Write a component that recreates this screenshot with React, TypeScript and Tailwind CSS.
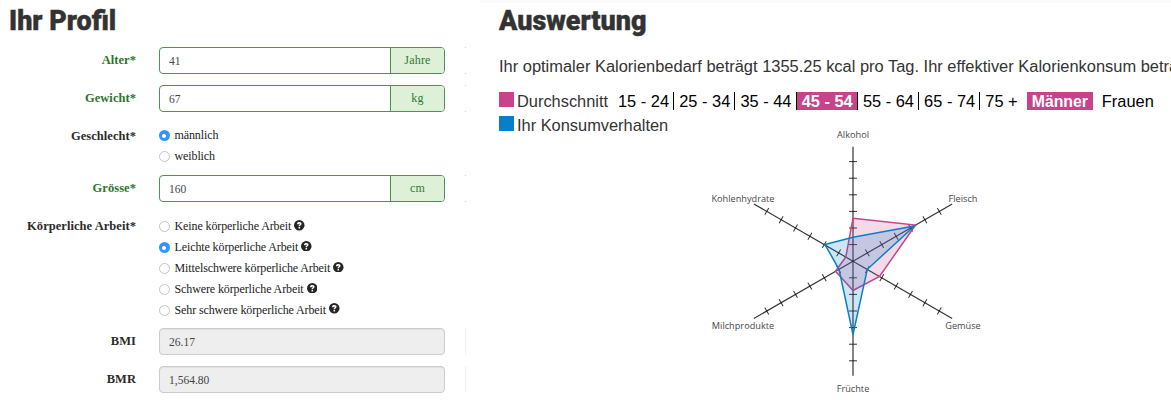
import type { ReactNode } from 'react';

function Heading({ children, className }: { children: ReactNode; className: string }) {
  return (
    <h2 className={`origin-left whitespace-nowrap font-[Roboto,sans-serif] text-[28.5px] font-black leading-[41px] text-[#333] [-webkit-text-stroke:0.4px_#333] ${className}`}>
      {children}
    </h2>
  );
}

function Label({ children, valid, className = '' }: { children: ReactNode; valid?: boolean; className?: string }) {
  return (
    <div className={`w-[136px] shrink-0 whitespace-nowrap text-right text-[12.5px] font-bold leading-[26px] tracking-[0.05px] ${valid ? 'text-[#2b752d]' : 'text-[#2b2b2b]'} ${className}`}>
      {children}
    </div>
  );
}

function EdgeMarks({ valid }: { valid?: boolean }) {
  return valid ? (
    <div className="ml-[20px] flex h-[27px] w-px flex-col justify-between">
      <span className="h-px bg-[#ccc]" />
      <span className="h-px bg-[#ccc]" />
    </div>
  ) : (
    <div className="ml-[20px] h-[27px] w-px bg-[#f0f0f0]" />
  );
}

function UnitField({ value, unit }: { value: string; unit: string }) {
  return (
    <>
      <div className="ml-[23px] flex h-[27px] w-[286px] overflow-hidden rounded-[4px] border border-[#4f9152] text-[11.5px] leading-[26px]">
        <div className="flex-1 pl-[9px] text-[#444]">{value}</div>
        <div className="w-[54px] border-l border-[#4f9152] bg-[#dff0d8] text-center text-[12px] leading-[25px] tracking-[0.2px] text-[#2f7832]">{unit}</div>
      </div>
      <EdgeMarks valid />
    </>
  );
}

function ReadonlyField({ value }: { value: string }) {
  return (
    <>
      <div className="ml-[23px] h-[27px] w-[286px] rounded-[4px] border border-[#ccc] bg-[#eee] pl-[9px] text-[11.5px] leading-[26px] text-[#444] shadow-[inset_0_1px_1px_rgba(0,0,0,0.06)]">
        {value}
      </div>
      <EdgeMarks />
    </>
  );
}

function HelpIcon() {
  return (
    <svg viewBox="0 0 10 10" className="mb-[2px] ml-[3px] h-[10.5px] w-[10.5px] shrink-0">
      <circle cx="5" cy="5" r="5" fill="#252525" />
      <path d="M2.9 4V3.6C2.9 2.4 3.8 1.8 5.1 1.8S7.2 2.5 7.2 3.6C7.2 4.8 5.9 4.8 5.8 5.8H4.3C4.3 4.7 5.5 4.5 5.5 3.8C5.5 3.1 4.5 3.1 4.4 4Z M4.3 6.5H5.8V8H4.3Z" fill="white" />
    </svg>
  );
}

function Option({ text, checked, help }: { text: string; checked?: boolean; help?: boolean }) {
  return (
    <div className="flex h-[20.8px] items-center">
      <span
        className={
          checked
            ? 'mt-px flex h-[11px] w-[11px] shrink-0 items-center justify-center rounded-full bg-[#3395ff]'
            : 'mt-px h-[11px] w-[11px] shrink-0 rounded-full border border-[#c4c4c4] bg-white'
        }
      >
        {checked && <span className="h-[4px] w-[4px] rounded-full bg-white" />}
      </span>
      <span className="ml-[5px] whitespace-nowrap text-[12px] leading-[20px] tracking-[-0.11px] text-[#222]">{text}</span>
      {help && <HelpIcon />}
    </div>
  );
}

const angles = [-90, -30, 30, 90, 150, 210];
const names: [string, number, number][] = [
  ['Alkohol', 853, 137.5],
  ['Fleisch', 963, 201.5],
  ['Gemüse', 963, 328.5],
  ['Früchte', 853, 392],
  ['Milchprodukte', 743, 328.5],
  ['Kohlenhydrate', 743, 201.5],
];

function Radar() {
  return (
    <svg viewBox="499 127 672 273" className="h-[273px] w-[672px] shrink-0 overflow-visible">
      {angles.map((a) => (
        <g key={a} transform={`translate(853 261.2) rotate(${a})`} stroke="#000" strokeOpacity="0.8">
          <path d="M0 0H114.5" strokeWidth="1.2" />
          <path d="M16.6 -4V4M33.2 -4V4M49.8 -4V4M66.4 -4V4M83 -4V4M99.6 -4V4" strokeWidth="1" />
        </g>
      ))}
      <polygon points="853,218.3 915.5,225 879.5,276.5 853,290.5 835.5,271.2 845.8,257" fill="#c8438a" fillOpacity="0.2" stroke="#c8438a" strokeWidth="1.5" />
      <polygon points="853,237.3 914.5,226 867.3,269.3 853,334.5 839,269.3 825,244.6" fill="#0a7fc8" fillOpacity="0.2" stroke="#0a7fc8" strokeWidth="1.5" />
      {names.map(([name, x, y]) => (
        <text key={name} x={x} y={y} textAnchor="middle" fill="#484848" className="font-['Open_Sans',sans-serif] text-[9.2px]">
          {name}
        </text>
      ))}
    </svg>
  );
}

const ages = ['15 - 24', '25 - 34', '35 - 44', '45 - 54', '55 - 64', '65 - 74', '75 +'];

export default function App() {
  return (
    <main className="flex h-[400px] w-[1171px] overflow-hidden bg-white">
      <section className="w-[480px] shrink-0 font-['Liberation_Serif',serif]">
        <Heading className="ml-[9px] h-[47px] scale-x-[0.945]">Ihr Profil</Heading>
        <div className="flex h-[38px]">
          <Label valid>Alter*</Label>
          <UnitField value="41" unit="Jahre" />
        </div>
        <div className="flex h-[40px]">
          <Label valid>Gewicht*</Label>
          <UnitField value="67" unit="kg" />
        </div>
        <div className="flex h-[50px]">
          <Label className="-mt-[2px]">Geschlecht*</Label>
          <div className="ml-[22.5px]">
            <Option text="männlich" checked />
            <Option text="weiblich" />
          </div>
        </div>
        <div className="flex h-[41px]">
          <Label valid>Grösse*</Label>
          <UnitField value="160" unit="cm" />
        </div>
        <div className="flex h-[112px]">
          <Label className="-mt-[3px]">Körperliche Arbeit*</Label>
          <div className="ml-[22.5px]">
            <Option help text="Keine körperliche Arbeit" />
            <Option help checked text="Leichte körperliche Arbeit" />
            <Option help text="Mittelschwere körperliche Arbeit" />
            <Option help text="Schwere körperliche Arbeit" />
            <Option help text="Sehr schwere körperliche Arbeit" />
          </div>
        </div>
        <div className="flex h-[38px]">
          <Label>BMI</Label>
          <ReadonlyField value="26.17" />
        </div>
        <div className="flex h-[27px]">
          <Label>BMR</Label>
          <ReadonlyField value="1,564.80" />
        </div>
      </section>
      <section className="flex min-w-0 flex-1 flex-col border-t-[3px] border-[#fafafa] pl-[19px] font-['Liberation_Sans',sans-serif] text-[16.4px] text-[#333]">
        <Heading className="-mt-[3px] h-[53px] scale-x-[0.945]">Auswertung</Heading>
        <p className="h-[39px] whitespace-nowrap text-[16.44px] leading-[26px]">
          Ihr optimaler Kalorienbedarf beträgt 1355.25 kcal pro Tag. Ihr effektiver Kalorienkonsum beträgt
        </p>
        <div className="flex h-[24px] items-start whitespace-nowrap leading-[19px]">
          <span className="mr-[3px] h-[15px] w-[15px] bg-[#c8438a]" />
          <span className="w-[96px]">Durchschnitt</span>
          {ages.map((age, i) => (
            <span
              key={age}
              className={`h-[18px] pr-[4.2px] pl-[5px] ${i < 6 ? 'border-r border-black' : ''} ${i === 3 ? 'bg-[#c8438a] font-bold text-white' : 'text-black'}`}
            >
              {age}
            </span>
          ))}
          <span className="ml-[5px] h-[18px] w-[66px] bg-[#c8438a] text-center text-[15.8px] font-bold text-white">Männer</span>
          <span className="ml-[9px] text-black">Frauen</span>
        </div>
        <div className="flex h-[11px] items-start whitespace-nowrap leading-[18px]">
          <span className="mr-[3px] -mt-[0.5px] h-[15px] w-[15px] bg-[#0a7fc8]" />
          <span>Ihr Konsumverhalten</span>
        </div>
        <Radar />
      </section>
    </main>
  );
}
